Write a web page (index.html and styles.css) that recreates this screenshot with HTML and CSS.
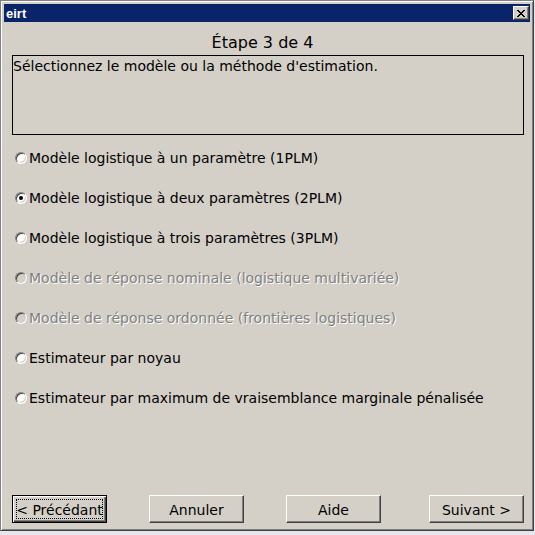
FILE: index.html
```html
<!DOCTYPE html>
<html lang="fr">
<head>
<meta charset="utf-8">
<title>eirt</title>
<link rel="stylesheet" href="styles.css">
</head>
<body>
<div class="window">
  <div class="titlebar">
    <span class="title">eirt</span>
    <span class="close"><svg width="8" height="7" viewBox="0 0 8 7" shape-rendering="crispEdges"><path d="M0 0h2v1H0zM6 0h2v1H6zM1 1h2v1H1zM5 1h2v1H5zM2 2h4v1H2zM3 3h2v1H3zM2 4h4v1H2zM1 5h2v1H1zM5 5h2v1H5zM0 6h2v1H0zM6 6h2v1H6z" fill="#000"/></svg></span>
  </div>
  <div class="client">
    <div class="step">Étape 3 de 4</div>
    <div class="desc">Sélectionnez le modèle ou la méthode d'estimation.</div>
    <ul class="options">
      <li class="opt"><span class="radio"></span><span class="label">Modèle logistique à un paramètre (1PLM)</span></li>
      <li class="opt"><span class="radio checked"></span><span class="label">Modèle logistique à deux paramètres (2PLM)</span></li>
      <li class="opt"><span class="radio"></span><span class="label">Modèle logistique à trois paramètres (3PLM)</span></li>
      <li class="opt disabled"><span class="radio"></span><span class="label">Modèle de réponse nominale (logistique multivariée)</span></li>
      <li class="opt disabled"><span class="radio"></span><span class="label">Modèle de réponse ordonnée (frontières logistiques)</span></li>
      <li class="opt"><span class="radio"></span><span class="label">Estimateur par noyau</span></li>
      <li class="opt"><span class="radio"></span><span class="label">Estimateur par maximum de vraisemblance marginale pénalisée</span></li>
    </ul>
    <div class="buttons">
      <div class="btn default"><span class="focus">&lt; Précédant</span></div>
      <div class="btn">Annuler</div>
      <div class="btn">Aide</div>
      <div class="btn next">Suivant &gt;</div>
    </div>
  </div>
</div>
</body>
</html>
```
FILE: styles.css
```css
html, body {
  margin: 0;
  padding: 0;
}
body {
  width: 535px;
  height: 535px;
  overflow: hidden;
  background: #e6e6ec;
  font-family: "DejaVu Sans", sans-serif;
  color: #000;
}
.window {
  box-sizing: border-box;
  width: 534px;
  height: 531px;
  background: #d4d0c8;
  border: 1px solid;
  border-color: #808080 #404040 #404040 #808080;
  box-shadow: inset 1px 1px #ffffff, inset -1px -1px #808080;
  padding: 3px;
  display: flex;
  flex-direction: column;
}
.titlebar {
  height: 18px;
  background: #0a246a;
  display: flex;
  align-items: center;
  justify-content: space-between;
  padding: 0 1px 0 2px;
  flex: none;
}
.title {
  font-family: "Liberation Sans", sans-serif;
  font-weight: bold;
  font-size: 13px;
  color: #fff;
}
.close {
  box-sizing: border-box;
  width: 16px;
  height: 14px;
  background: #d4d0c8;
  border: 1px solid;
  border-color: #fff #404040 #404040 #fff;
  box-shadow: inset -1px -1px #808080;
  display: flex;
  align-items: center;
  justify-content: center;
}
.client {
  flex: 1;
  display: flex;
  flex-direction: column;
  padding: 0 6px 0 8px;
}
.step {
  font-size: 16px;
  line-height: 19px;
  text-align: center;
  margin: 11px 11px 0 0;
}
.desc {
  box-sizing: border-box;
  height: 80px;
  margin-top: 3px;
  border: 1px solid #000;
  font-size: 14px;
  line-height: 17px;
  padding: 2px 0 0 0;
}
.options {
  list-style: none;
  margin: 3px 0 0 3px;
  padding: 0;
}
.opt {
  height: 40px;
  display: flex;
  align-items: center;
  gap: 2px;
  font-size: 14px;
  line-height: 17px;
}
.radio {
  box-sizing: border-box;
  width: 12px;
  height: 12px;
  border-radius: 50%;
  background: #fff;
  border: 1px solid;
  border-color: #808080 #fff #fff #808080;
  box-shadow: inset 1px 1px #404040, inset -1px -1px #d4d0c8;
  display: flex;
  align-items: center;
  justify-content: center;
  flex: none;
}
.radio.checked::after {
  content: "";
  width: 4px;
  height: 4px;
  border-radius: 50%;
  background: #000;
}
.opt.disabled .radio {
  background: #d4d0c8;
}
.opt.disabled .label {
  color: #808080;
  text-shadow: 1px 1px #fff;
}
.buttons {
  margin-top: auto;
  margin-bottom: 4px;
  display: flex;
  gap: 42px;
}
.btn {
  box-sizing: border-box;
  width: 95px;
  height: 28px;
  border: 1px solid;
  border-color: #fff #404040 #404040 #fff;
  box-shadow: inset -1px -1px #808080;
  display: flex;
  align-items: center;
  justify-content: center;
  font-size: 14px;
  padding-top: 2px;
}
.btn.default {
  border-color: #000;
  box-shadow: inset 1px 1px #fff, inset -1px -1px #404040, inset -2px -2px #808080;
  padding: 3px;
}
.focus {
  box-sizing: border-box;
  width: 100%;
  height: 100%;
  border: 1px dotted #000;
  display: flex;
  align-items: center;
  justify-content: center;
  padding-top: 1px;
  white-space: nowrap;
}
.btn.next {
  margin-left: auto;
}
```
